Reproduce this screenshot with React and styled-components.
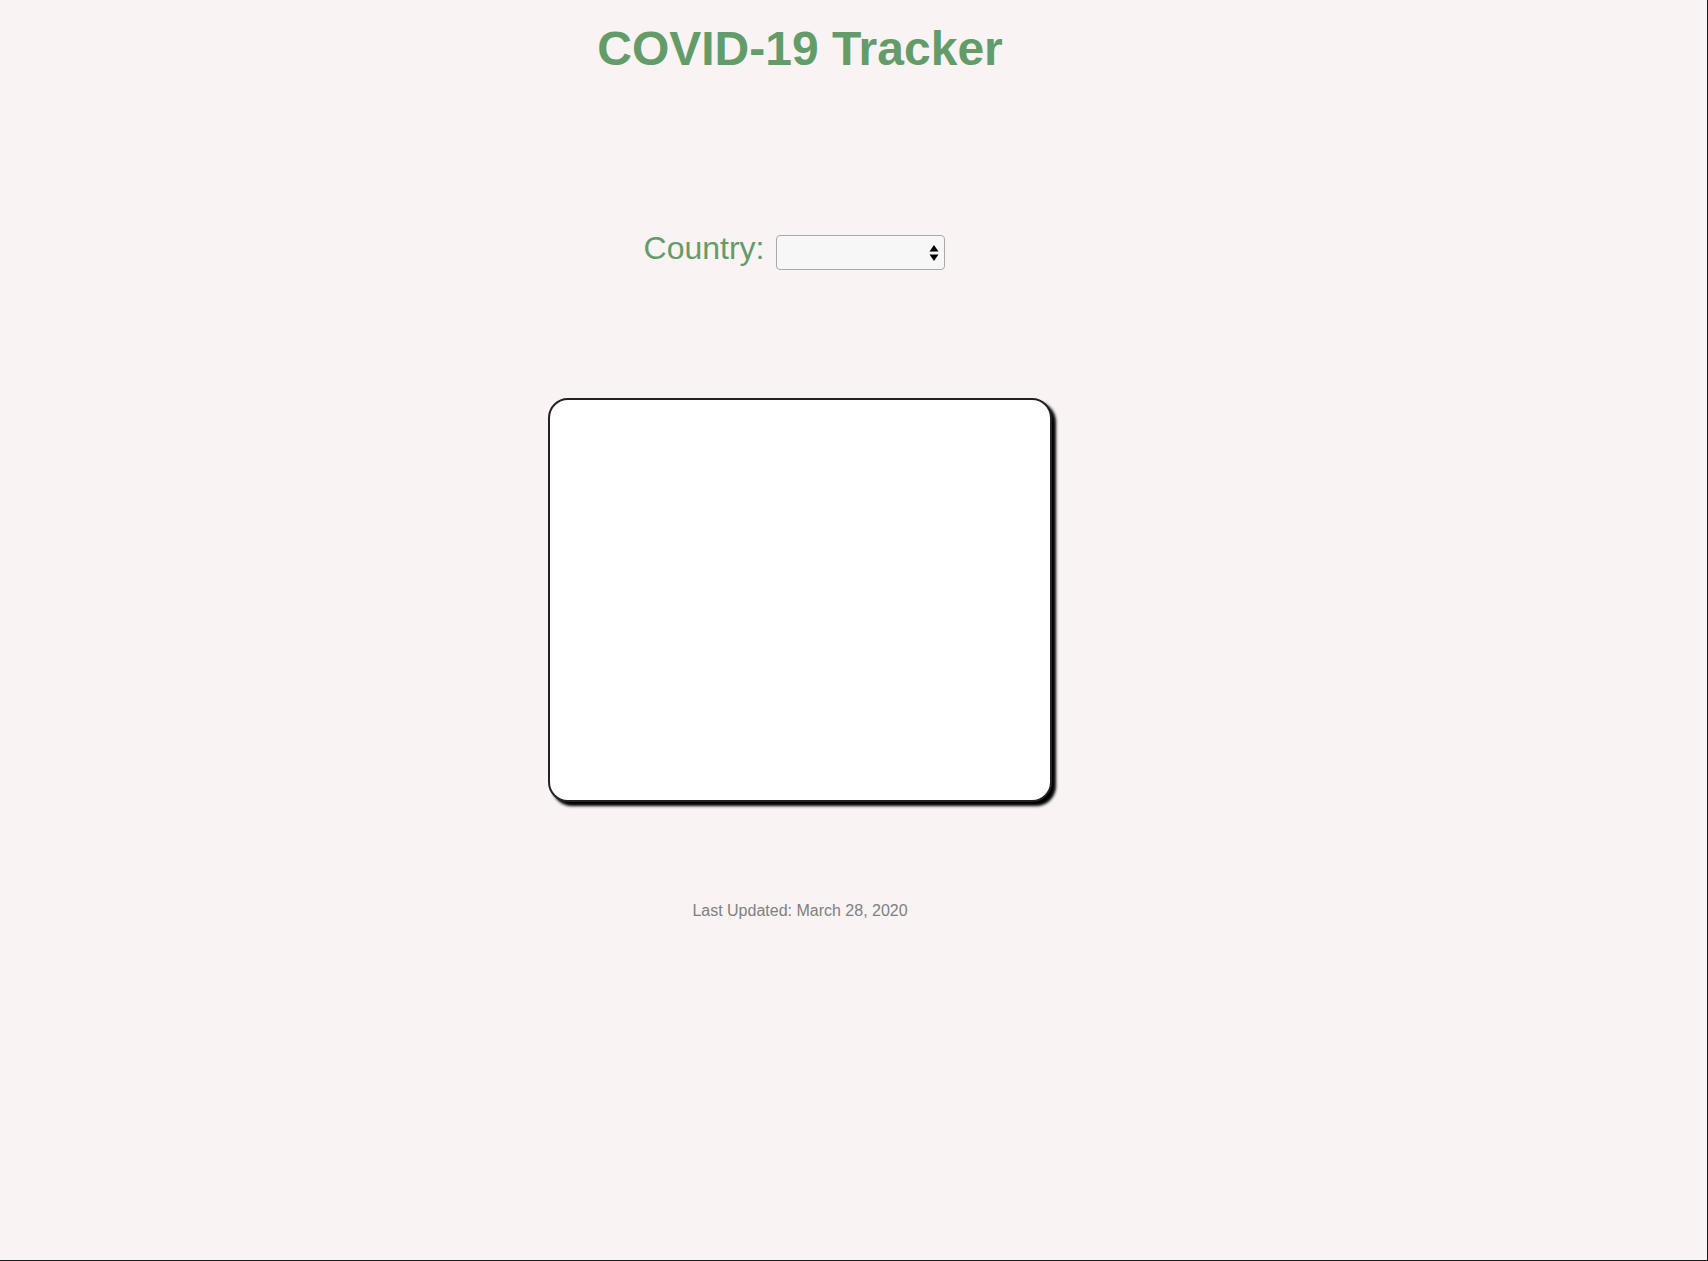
import React from "react";
import styled, { createGlobalStyle } from "styled-components";

const GlobalStyle = createGlobalStyle`
  html, body {
    margin: 0;
    padding: 0;
    background: #f9f3f3;
  }
  * {
    box-sizing: border-box;
  }
`;

const Page = styled.div`
  width: 100vw;
  height: 100vh;
  background: #f9f3f3;
  box-shadow: inset -1px -1px 0 #1a1a1a;
  font-family: "Liberation Sans", Arial, Helvetica, sans-serif;
  overflow: hidden;
`;
const Column = styled.main`
  width: 1600px;
  display: flex;
  flex-flow: column;
  align-items: center;
`;
const Title = styled.h1`
  margin: 0;
  padding: 21px 0 0;
  font-size: 48px;
  line-height: 55px;
  font-weight: 700;
  color: #639c69;
`;
const CountryRow = styled.div`
  margin-top: 154px;
  display: flex;
  align-items: flex-start;
  gap: 12px;
  padding-right: 11px;
`;
const Label = styled.label`
  font-size: 32px;
  line-height: 37px;
  color: #639c69;
`;
const SelectWrap = styled.div`
  position: relative;
  margin-top: 5px;
`;
const Select = styled.select`
  appearance: none;
  width: 169px;
  height: 35px;
  padding: 0 24px 0 8px;
  border: 1px solid #a9a9a9;
  border-radius: 4px;
  background: #f8f7f7;
  font-family: inherit;
  font-size: 16px;
  color: #000;
  outline: none;
`;
const Arrows = styled.svg`
  position: absolute;
  top: 10px;
  right: 6px;
  pointer-events: none;
`;
const Card = styled.section`
  margin-top: 128px;
  width: 504px;
  height: 404px;
  background: #fff;
  border: 2px solid #222;
  border-radius: 20px;
  box-shadow: 4px 4px 3px #000;
`;
const Updated = styled.p`
  margin: 100px 0 0;
  font-size: 16px;
  line-height: 18px;
  color: #808080;
`;

export default function App() {
  return (
    <Page>
      <GlobalStyle />
      <Column>
        <Title>COVID-19 Tracker</Title>
        <CountryRow>
          <Label htmlFor="country">Country:</Label>
          <SelectWrap>
            <Select id="country" defaultValue="">
              <option value=""></option>
            </Select>
            <Arrows width="10" height="16" viewBox="0 0 10 16">
              <path d="M5 0 L9.5 6.5 L0.5 6.5 Z" fill="#000" />
              <path d="M5 16 L9.5 9.5 L0.5 9.5 Z" fill="#000" />
            </Arrows>
          </SelectWrap>
        </CountryRow>
        <Card />
        <Updated>Last Updated: March 28, 2020</Updated>
      </Column>
    </Page>
  );
}
